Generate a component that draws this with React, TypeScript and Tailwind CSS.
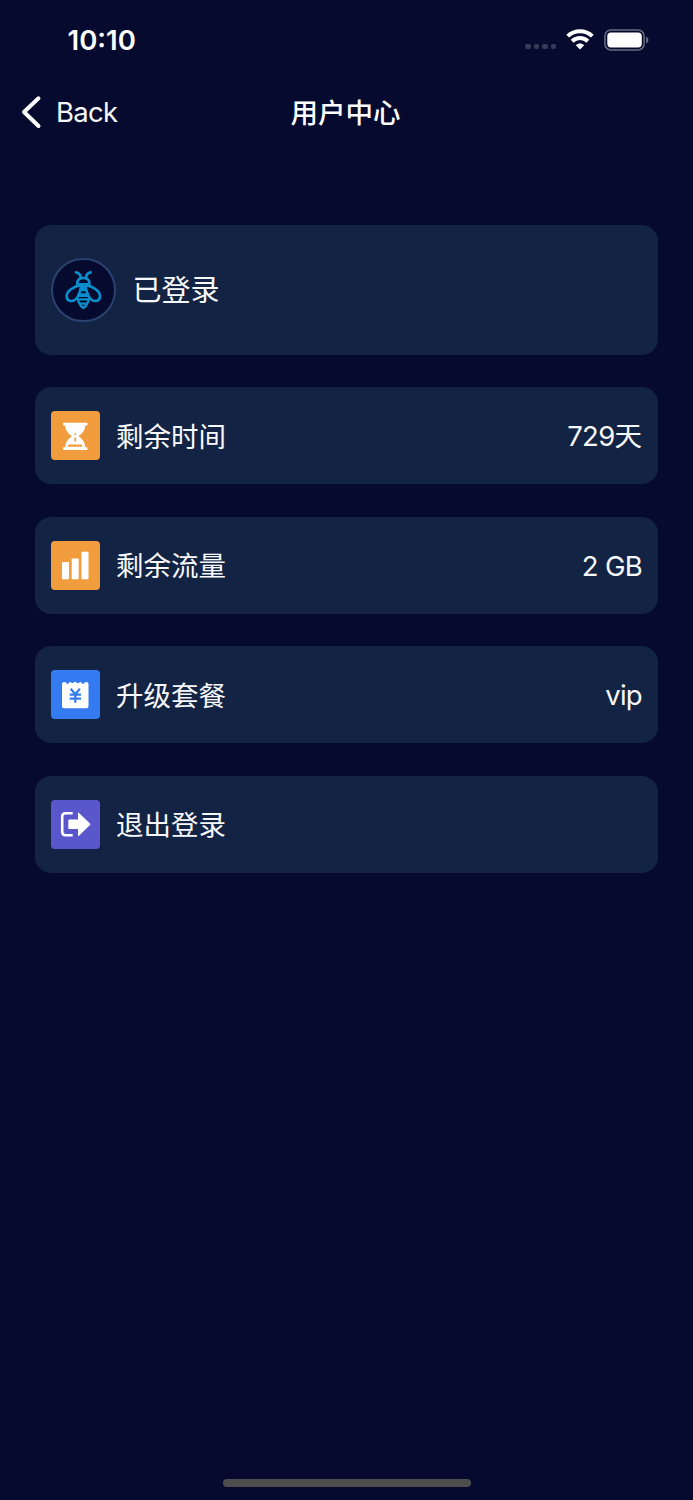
import React from "react";

function BeeIcon() {
  return (
    <svg width="45" height="46" viewBox="0 0 135 138" fill="none" stroke="#0a8fce" strokeWidth="8" strokeLinecap="round" strokeLinejoin="round" className="shrink-0">
      <path d="M45 16C52 17 58 22 60 33M89 16C82 17 76 22 74 33" />
      <path d="M49 52V49C49 38 57 33 67 33S85 38 85 49V52Z" />
      <path d="M58 54C38 59 17 72 17 87C17 97 23 102 32 102C46 102 57 82 61 56M76 54C96 59 117 72 117 87C117 97 111 102 102 102C88 102 77 82 73 56" />
      <path d="M51 97C51 104 53 107 56 110C58 117 62 120 67 123C72 120 76 117 78 110C81 107 83 104 83 97" strokeWidth="7" />
      <path d="M60 69H74M55 82H79M50 97H84M56 110H78" strokeWidth="7" />
      <path d="M62 56H72L75 70H59ZM56 81H78L82 90H52Z" fill="#0a8fce" stroke="none" />
    </svg>
  );
}

function HourglassIcon() {
  return (
    <svg width="48" height="48" viewBox="0 0 48 48" fill="#fff">
      <rect x="12" y="10.700" width="24.500" height="2.700" rx="1" />
      <rect x="12" y="35.300" width="24.500" height="2.700" rx="1" />
      <path d="M14.200 13H34.200C34.200 18.500 31.500 21.200 27.500 24.200C31.500 27 34.200 30 34.200 36H14.200C14.200 30 17 27 21 24.200C17 21.200 14.200 18.500 14.200 13Z" />
      <path d="M17.200 34.800V33.200Q17.200 32.400 18 32.400H30.400Q31.200 32.400 31.200 33.200V34.800Z" fill="#f19d3e" />
      <rect x="23.400" y="21.300" width="1.700" height="1.700" rx=".6" fill="#f19d3e" />
      <rect x="23.400" y="25.500" width="1.700" height="4.300" rx=".8" fill="#f19d3e" />
    </svg>
  );
}

function BarsIcon() {
  return (
    <svg width="48" height="48" viewBox="0 0 48 48" fill="#fff">
      <rect x="11" y="21" width="7" height="17.300" rx=".7" />
      <rect x="20.700" y="17.500" width="7" height="20.800" rx=".7" />
      <rect x="30.500" y="10.800" width="7" height="27.500" rx=".7" />
    </svg>
  );
}

function VoucherIcon() {
  return (
    <svg width="48" height="48" viewBox="0 0 48 48">
      <path d="M13 11H14.500A2 1.700 0 0 0 18.500 11H19.600A2 1.700 0 0 0 23.200 11H25A2 1.700 0 0 0 28.800 11H30A2 1.700 0 0 0 34 11H35.500Q37.500 11 37.500 13V35.300Q37.500 37.300 35.500 37.300H13Q11 37.300 11 35.300V13Q11 11 13 11Z" fill="#fff" />
      <path d="M19.700 17.800L24.300 23.200L28.900 17.800M24.300 23.200V31.800M18.700 23.700H30M18.700 27.700H30" fill="none" stroke="#347af0" strokeWidth="2.200" />
    </svg>
  );
}

function LogoutIcon() {
  return (
    <svg width="48" height="48" viewBox="0 0 48 48">
      <path d="M21.700 13.200H14.500Q11.200 13.200 11.200 16.500V31.800Q11.200 35.200 14.500 35.200H21.700" fill="none" stroke="#fff" strokeWidth="2.600" />
      <path d="M17.300 20.200Q17.300 19.500 18 19.500H27V13.200Q27 12 28 12.900L39 23.500Q39.700 24.200 39 24.900L28 35.700Q27 36.500 27 35.300V29H18Q17.300 29 17.300 28.300Z" fill="#fff" />
    </svg>
  );
}

interface RowProps {
  icon: React.ReactNode;
  tile: string;
  label: string;
  value?: React.ReactNode;
}

function Row({ icon, tile, label, value }: RowProps) {
  return (
    <section className="flex h-[97px] items-center rounded-[16px] bg-[#132343] px-4">
      <div className={`flex size-[49px] shrink-0 items-center rounded-[4px] ${tile}`}>{icon}</div>
      <span className="ml-[16px] flex-1 pt-[2px]">{label}</span>
      <span className="pt-px tracking-[-0.7px]">{value}</span>
    </section>
  );
}

export default function App() {
  return (
    <div className="flex h-[1500px] w-[693px] flex-col bg-[#050a2e] font-['Inter','Noto_Sans_CJK_SC',sans-serif] text-[27.500px] leading-[40px] text-[#f7f8fb]">
      <header className="flex h-[80px] items-center justify-between pr-[44px] pl-[67.500px]">
        <span className="text-[27.500px] font-semibold text-white">10:10</span>
        <div className="flex items-center">
          <div className="mt-[13px] mr-[10px] flex gap-[3px]">
            <i className="size-[5.500px] rounded-[2px] bg-[#393c59]" />
            <i className="size-[5.500px] rounded-[2px] bg-[#393c59]" />
            <i className="size-[5.500px] rounded-[2px] bg-[#393c59]" />
            <i className="size-[5.500px] rounded-[2px] bg-[#393c59]" />
          </div>
          <svg className="mb-[2px]" width="28" height="22" viewBox="0 0 28 22" fill="none" stroke="#fff" strokeWidth="4">
            <path d="M1.700 8.100C8.500 1.500 19.500 1.500 26.300 8.100M6.200 13.200C10.500 9 17.500 9 21.800 13.200" />
            <path d="M14 21.500L9.800 17.300C12.200 15 15.800 15 18.200 17.300Z" fill="#fff" stroke="none" />
          </svg>
          <svg className="mb-px ml-[10px]" width="45" height="22" viewBox="0 0 45 22">
            <rect x=".9" y=".9" width="39.200" height="20" rx="6" fill="none" stroke="#6a6c83" strokeWidth="1.500" />
            <rect x="3.300" y="3.400" width="34.500" height="15" rx="3.700" fill="#fff" />
            <path d="M42 7.500Q44.500 8.500 44.500 11T42 14.500Z" fill="#6a6c83" />
          </svg>
        </div>
      </header>
      <nav className="grid h-[64px] grid-cols-[1fr_auto_1fr] items-center">
        <button className="flex items-center pl-[20px] text-left">
          <svg width="22" height="34" viewBox="0 0 22 34" fill="none" stroke="#fff" strokeWidth="4" strokeLinecap="round" strokeLinejoin="round">
            <path d="M18.500 3.300L4 17L18.500 31" />
          </svg>
          <span className="ml-[14px] text-[27.500px] tracking-[-0.7px]">Back</span>
        </button>
        <h1 className="-ml-[2px] pt-px text-[27.500px] font-medium text-white">用户中心</h1>
      </nav>
      <main className="flex flex-col gap-[32.500px] px-[35px] pt-[81px]">
        <section className="flex h-[129.500px] items-center rounded-[16px] bg-[#132343] pl-4 text-[29px]">
          <div className="flex size-[64.500px] items-center justify-center rounded-full border-2 border-[#2a426f] bg-[#050a2e]">
            <BeeIcon />
          </div>
          <span className="ml-[17px] pt-[3px]">已登录</span>
        </section>
        <Row icon={<HourglassIcon />} tile="bg-[#f19d3e]" label="剩余时间" value={<>729<span className="tracking-normal">天</span></>} />
        <Row icon={<BarsIcon />} tile="bg-[#f19d3e]" label="剩余流量" value="2 GB" />
        <Row icon={<VoucherIcon />} tile="bg-[#347af0]" label="升级套餐" value="vip" />
        <Row icon={<LogoutIcon />} tile="bg-[#5a56cb]" label="退出登录" />
      </main>
      <div className="mx-auto mt-auto mb-[13px] h-2 w-[248px] rounded-full bg-[#4d4d4d]" />
    </div>
  );
}
